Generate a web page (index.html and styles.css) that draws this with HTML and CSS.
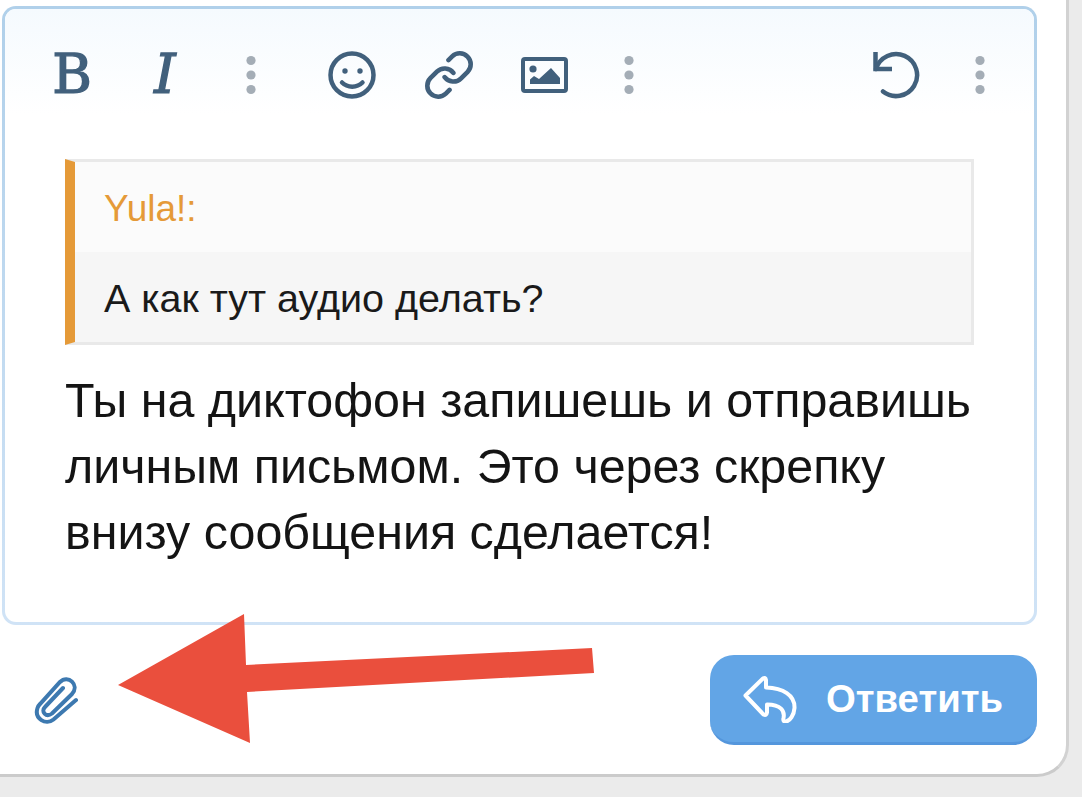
FILE: index.html
```html
<!DOCTYPE html>
<html lang="ru">
<head>
  <meta charset="UTF-8">
  <title>Ответить</title>
  <link rel="stylesheet" href="styles.css">
</head>
<body>
  <div class="card">
    <div class="editor">
      <div class="toolbar">
        <span class="tool letter">B</span>
        <span class="tool letter letter-i">I</span>
        <svg class="tool dots" viewBox="0 0 48 48"><circle cx="24" cy="9.5" r="4.6"/><circle cx="24" cy="24" r="4.6"/><circle cx="24" cy="38.5" r="4.6"/></svg>
        <svg class="tool after-dots" viewBox="0 0 48 48">
          <circle class="line" cx="24" cy="24" r="21.5"/>
          <circle class="solid" cx="17" cy="20" r="2.7"/>
          <circle class="solid" cx="32" cy="20" r="2.7"/>
          <path class="line" d="M14 31.5c5.5 5.5 15 5.5 20.5 0"/>
        </svg>
        <svg class="tool link" viewBox="1 1 22 22">
          <path class="line thin" d="M10 13a5 5 0 0 0 7.54.54l3-3a5 5 0 0 0-7.07-7.07l-1.72 1.71"/>
          <path class="line thin" d="M14 11a5 5 0 0 0-7.54-.54l-3 3a5 5 0 0 0 7.07 7.07l1.71-1.71"/>
        </svg>
        <svg class="tool image" viewBox="0 0 48 48">
          <rect class="line frame" x="2" y="8" width="43" height="32" rx="2"/>
          <circle class="solid" cx="12" cy="18" r="3.6"/>
          <path class="solid" d="M9 33v-4.500l4-3.500 5 3 12-11 9 10v6z"/>
        </svg>
        <svg class="tool dots dots-end" viewBox="0 0 48 48"><circle cx="24" cy="9.5" r="4.6"/><circle cx="24" cy="24" r="4.6"/><circle cx="24" cy="38.5" r="4.6"/></svg>
        <svg class="tool undo" viewBox="0 0 48 48">
          <path class="line square" d="M3.5 1v17H20"/>
          <path class="line" d="M4 18A21 21 0 1 1 11 40.5"/>
        </svg>
        <svg class="tool dots dots-end" viewBox="0 0 48 48"><circle cx="24" cy="9.5" r="4.6"/><circle cx="24" cy="24" r="4.6"/><circle cx="24" cy="38.5" r="4.6"/></svg>
      </div>
      <div class="content">
        <div class="quote">
          <div class="quote-head">Yula!:</div>
          <div class="quote-body">А как тут аудио делать?</div>
        </div>
        <p class="message">Ты на диктофон запишешь и отправишь личным письмом. Это через скрепку внизу сообщения сделается!</p>
      </div>
    </div>
    <div class="footer">
      <svg class="clip" viewBox="0 0 44 47">
        <path d="M42 23L19.500 42.500C12 48.500 0 42 3.500 31C4 29.500 5 28 6 27L26 5C34 -3 46 8 38 17L18 36.500C12 41 6.500 34.500 11 30L29 11"/>
      </svg>
      <button class="reply" type="button">
        <svg class="reply-icon" viewBox="0 0 54 48">
          <path d="M2.5 20.5L20 3.5Q22.5 2 23 5V12.5C40 13 52 20 51.5 33C51 40 47 46 43 46.5C40.5 47 40 45 40.5 43C42 36 38 29.5 24 29.5V37.5Q23.5 41 20.5 39.5Z"/>
        </svg>
        Ответить
      </button>
    </div>
  </div>
  <svg class="arrow" viewBox="0 0 1082 797">
    <polygon points="118,685 244,614 246,665 592,648 594,673 247,692 250,743"/>
  </svg>
</body>
</html>
```

FILE: styles.css
```css
html,
body {
  margin: 0;
  height: 797px;
  overflow: hidden;
}

body {
  background-color: #ebebeb;
  font-family: "Liberation Sans", Arial, sans-serif;
}

.card {
  box-sizing: border-box;
  width: 1069px;
  height: 777px;
  padding: 6px 29px 0 2px;
  background: #fff;
  border-right: 3px solid #d2d2d2;
  border-bottom: 3px solid #cbcbcb;
  border-bottom-right-radius: 32px;
}

.editor {
  box-sizing: border-box;
  height: 619px;
  border: 3px solid transparent;
  border-radius: 14px;
  background:
    linear-gradient(#fff, #fff) padding-box,
    linear-gradient(#b0d0ea, #d0e3f6) border-box;
}

.toolbar {
  display: flex;
  align-items: center;
  height: 132px;
  padding: 0 30px 0 43px;
  box-sizing: border-box;
  border-radius: 11px 11px 0 0;
  background: linear-gradient(#f5fafe, #fff 80%);
  color: #41607c;
}

.tool {
  flex: none;
  width: 48px;
  height: 48px;
  margin-right: 45px;
}

.letter {
  font-family: "DejaVu Serif", serif;
  font-size: 54px;
  line-height: 48px;
  text-align: center;
  -webkit-text-stroke: 1.4px currentColor;
}

.letter-i {
  font-style: italic;
  margin-right: 38px;
}

.dots {
  fill: #a4adb6;
  margin-right: 53px;
}

.dots-end {
  margin-right: 0;
}

.after-dots {
  margin-right: 49px;
}

.link {
  margin-right: 48px;
}

.image {
  margin-right: 36px;
}

.toolbar .line {
  fill: none;
  stroke: currentColor;
  stroke-width: 4.5;
  stroke-linecap: round;
}

.toolbar .thin {
  stroke-width: 2.1;
}

.toolbar .square {
  stroke-linecap: butt;
}

.toolbar .frame {
  stroke-width: 4;
}

.toolbar .solid {
  fill: currentColor;
}

.undo {
  margin-left: auto;
  margin-right: 36px;
}

.content {
  padding: 18px 60px 0;
}

.quote {
  border: 3px solid #e9e9e9;
  border-left: 10px solid #e59a38;
}

.quote-head,
.quote-body {
  height: 90px;
  line-height: 93px;
  padding-left: 29px;
}

.quote-head {
  background: #fbfbfb;
  color: #e59a38;
  font-size: 37px;
}

.quote-body {
  background: #f6f6f6;
  color: #1a1a1a;
  font-size: 39.5px;
}

.message {
  margin: 22px 0 0;
  font-size: 48.4px;
  line-height: 66px;
  color: #141414;
}

.footer {
  display: flex;
  align-items: center;
  justify-content: space-between;
  padding: 30px 0 0 32px;
}

.clip {
  width: 44px;
  height: 47px;
  fill: none;
  stroke: #3d79b0;
  stroke-width: 4;
  stroke-linecap: round;
}

.reply {
  display: flex;
  align-items: center;
  gap: 29px;
  box-sizing: border-box;
  height: 90px;
  width: 327px;
  padding: 0 0 0 33px;
  border: 0;
  border-bottom: 3px solid #5496dc;
  border-radius: 24px;
  background: #62a5e6;
  color: #fff;
  font-family: inherit;
  font-size: 38.3px;
  font-weight: bold;
}

.reply-icon {
  width: 54px;
  height: 48px;
  fill: none;
  stroke: #fff;
  stroke-width: 4;
  stroke-linejoin: round;
}

.arrow {
  position: absolute;
  left: 0;
  top: 0;
  width: 1082px;
  height: 797px;
  fill: #ea4f3d;
  pointer-events: none;
}
```
